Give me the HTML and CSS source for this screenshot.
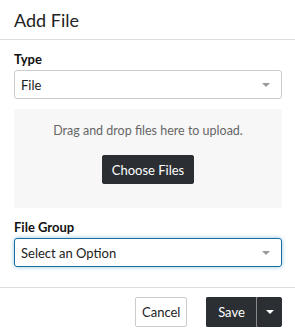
FILE: index.html
```html
<!DOCTYPE html>
<html lang="en">
<head>
    <meta charset="UTF-8">
    <meta name="viewport" content="width=device-width, initial-scale=1.0">
    <title>Add File</title>
    <link rel="stylesheet" href="styles.css">
</head>
<body>
    <div class="modal">
        <div class="modal-header">
            <h1>Add File</h1>
        </div>
        <div class="modal-body">
            <div class="field">
                <label>Type</label>
                <div class="select">
                    <span>File</span>
                    <span class="caret"></span>
                </div>
            </div>
            <div class="dropzone">
                <p>Drag and drop files here to upload.</p>
                <button class="btn-dark">Choose Files</button>
            </div>
            <div class="field">
                <label>File Group</label>
                <div class="select focused">
                    <span>Select an Option</span>
                    <span class="caret"></span>
                </div>
            </div>
        </div>
        <div class="modal-footer">
            <button class="btn-light">Cancel</button>
            <div class="split">
                <button class="btn-dark save">Save</button>
                <button class="btn-dark toggle"><span class="caret white"></span></button>
            </div>
        </div>
    </div>
</body>
</html>
```

FILE: styles.css
```css
body {
    margin: 0;
    background-color: #ffffff;
    color: #222222;
    font-family: Lato, "Open Sans", sans-serif;
}
.modal {
    width: 295px;
}
.modal-header {
    height: 40px;
    box-sizing: border-box;
    border-bottom: 1px solid #dddddd;
    padding: 0 14px;
    display: flex;
    align-items: center;
}
.modal-header h1 {
    margin: 0;
    font-size: 18px;
    font-weight: normal;
    color: #222222;
}
.modal-body {
    padding: 11px 13px 20px 14px;
    border-bottom: 1px solid #dddddd;
}
.field label {
    display: block;
    font-size: 13px;
    font-weight: bold;
    color: #111111;
    margin-bottom: 3px;
}
.select {
    height: 29px;
    box-sizing: border-box;
    border: 1px solid #cccccc;
    border-radius: 3px;
    padding: 0 11px 0 6px;
    display: flex;
    align-items: center;
    justify-content: space-between;
    font-size: 13px;
    color: #222222;
}
.select.focused {
    border-color: #1a6e9e;
    box-shadow: 0 0 4px rgba(60, 150, 200, 0.55);
}
.caret {
    width: 0;
    height: 0;
    border-left: 4px solid transparent;
    border-right: 4px solid transparent;
    border-top: 4px solid #999999;
}
.caret.white {
    border-top-color: #ffffff;
}
.dropzone {
    margin: 10px 0 11px;
    height: 99px;
    box-sizing: border-box;
    background-color: #f7f7f7;
    border-radius: 3px;
    display: flex;
    flex-direction: column;
    align-items: center;
    padding-top: 14px;
}
.dropzone p {
    margin: 0 0 17px;
    font-size: 12.5px;
    color: #666666;
}
.btn-dark {
    background-color: #2b2f33;
    color: #ffffff;
    border: 1px solid #2b2f33;
    border-radius: 2px;
    font-family: inherit;
    font-size: 13px;
    cursor: pointer;
}
.dropzone .btn-dark {
    width: 92px;
    height: 29px;
}
.modal-footer {
    display: flex;
    justify-content: flex-end;
    gap: 19px;
    padding: 9px 13px 0 0;
}
.btn-light {
    background-color: #ffffff;
    color: #222222;
    border: 1px solid #cccccc;
    border-radius: 2px;
    font-family: inherit;
    font-size: 13px;
    width: 52px;
    height: 30px;
    cursor: pointer;
}
.split {
    display: flex;
}
.split .save {
    width: 51px;
    height: 30px;
    border-radius: 2px 0 0 2px;
    border-right: 1px solid #888888;
}
.split .toggle {
    width: 25px;
    height: 30px;
    border-radius: 0 2px 2px 0;
    display: flex;
    align-items: center;
    justify-content: center;
}
```
